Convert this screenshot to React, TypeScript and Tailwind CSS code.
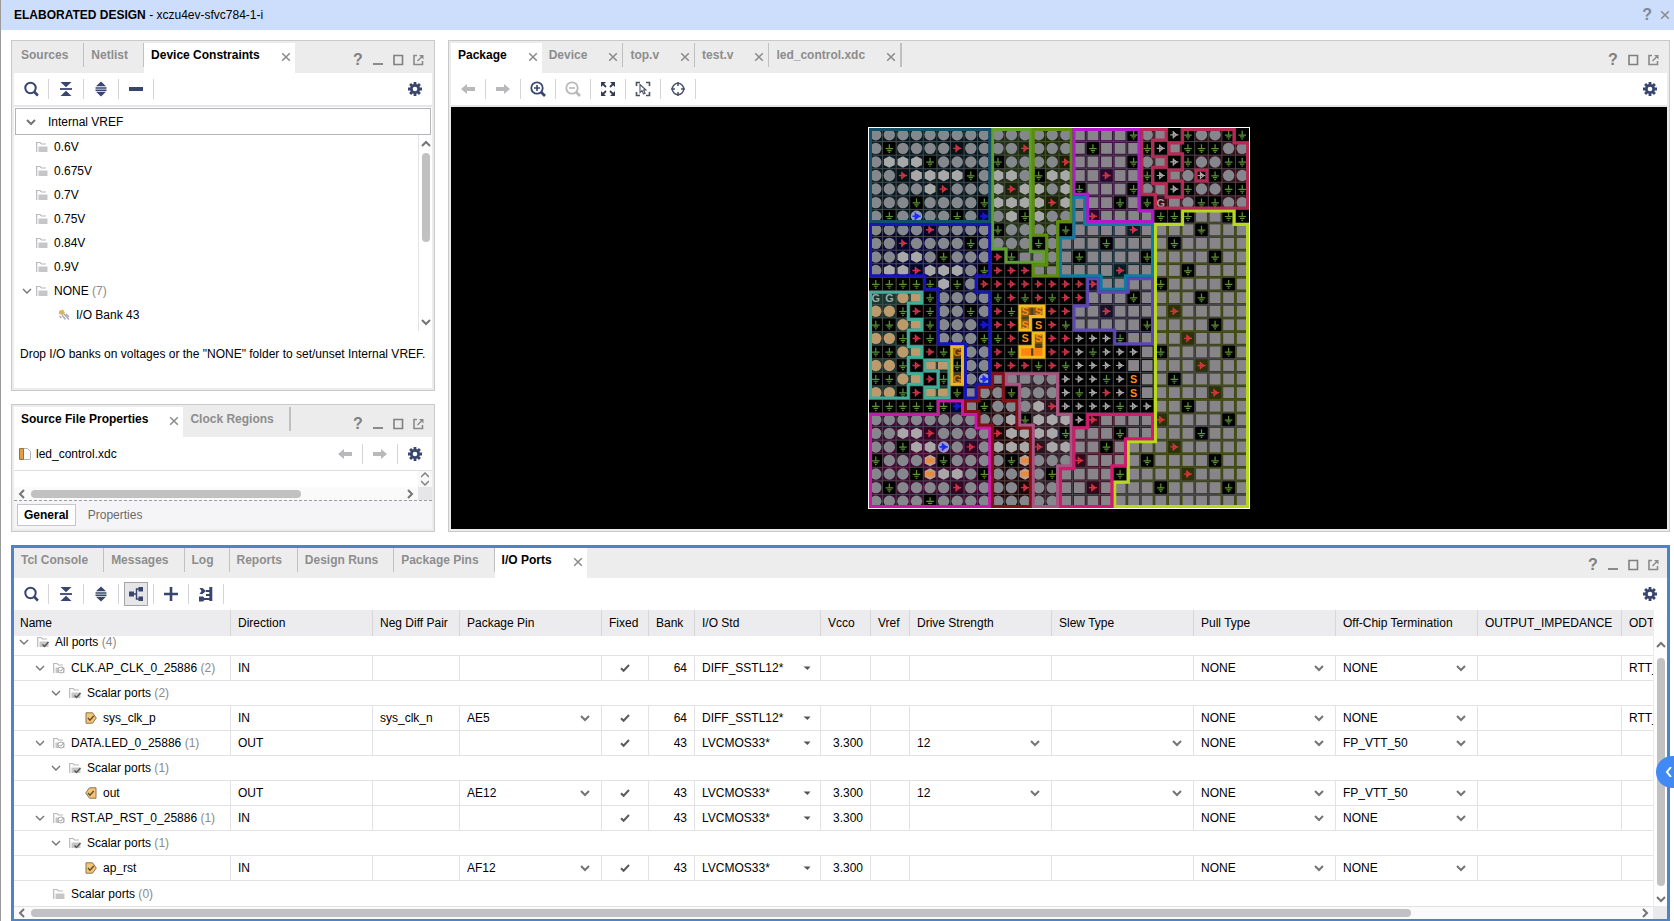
import { useState } from "react";
import type { ReactNode } from "react";
import clsx from "clsx";

const NAVY = "#38466f";

/* ---------- icons ---------- */

function Icon({ children, size = 16 }: { children: ReactNode; size?: number }) {
  return (
    <svg width={size} height={size} viewBox={`0 0 ${size} ${size}`} fill="none" className="shrink-0">
      {children}
    </svg>
  );
}

const SearchIcon = () => (
  <Icon>
    <circle cx="7.5" cy="7" r="5.2" stroke={NAVY} strokeWidth="2" />
    <path d="M11.5 11l3.4 3.6" stroke={NAVY} strokeWidth="2.6" />
  </Icon>
);

const CollapseIcon = () => (
  <Icon>
    <path d="M2.500 1h11L8 6.200zM2.500 15h11L8 9.800z" fill={NAVY} />
    <path d="M2 8h12" stroke={NAVY} strokeWidth="1.800" />
  </Icon>
);

const ExpandIcon = () => (
  <Icon>
    <path d="M3 5.300h10L8 .6zM3 10.700h10L8 15.400z" fill={NAVY} />
    <path d="M2.500 6.900h11M2.500 9.300h11" stroke={NAVY} strokeWidth="1.500" />
  </Icon>
);

const MinusIcon = () => (
  <Icon>
    <path d="M1 8h14" stroke={NAVY} strokeWidth="4" />
  </Icon>
);

const PlusIcon = () => (
  <Icon>
    <path d="M1 8h14M8 1v14" stroke={NAVY} strokeWidth="2.600" />
  </Icon>
);

const TreeIcon = () => (
  <Icon>
    <path d="M1 5.500h5v5H1zM10.500 1H15v4.500h-4.500zM10.500 10.500H15V15h-4.500z" fill={NAVY} />
    <path d="M6 8h2.500M11 3H8.500v10H11" stroke={NAVY} strokeWidth="1.400" />
  </Icon>
);

const PortIcon = () => (
  <Icon>
    <path d="M1.500 2h3l3.500 3-3.500 3h-3l2-3z" fill={NAVY} />
    <path d="M8 5h4M5 13h7M8 9h5" stroke={NAVY} strokeWidth="1.800" />
    <path d="M12.800 1v14" stroke={NAVY} strokeWidth="3" />
    <path d="M1 10.500h4l2.500 2.500L5 15.500H1z" fill={NAVY} />
  </Icon>
);

const GearIcon = () => (
  <Icon>
    <path
      d="M8 1v14M1 8h14M3.100 3.100l9.800 9.800M12.900 3.100l-9.800 9.800"
      stroke={NAVY}
      strokeWidth="2.800"
    />
    <circle cx="8" cy="8" r="5" fill={NAVY} />
    <circle cx="8" cy="8" r="2.300" fill="#fff" />
  </Icon>
);

const ArrowIcon = ({ flip }: { flip?: boolean }) => (
  <Icon>
    <path d={flip ? "M15 8L9 3v3H1v4h8v3z" : "M1 8l6-5v3h8v4H7v3z"} fill="#b9b9bb" />
  </Icon>
);

const ZoomIcon = ({ out }: { out?: boolean }) => (
  <Icon>
    <circle cx="7" cy="7" r="5.700" stroke={out ? "#b9b9bb" : NAVY} strokeWidth="1.800" />
    <path d="M11 11l4 4" stroke={out ? "#b9b9bb" : NAVY} strokeWidth="2.600" />
    <path d={out ? "M4 7h6" : "M4 7h6M7 4v6"} stroke={out ? "#b9b9bb" : NAVY} strokeWidth="1.600" />
  </Icon>
);

const FitIcon = () => (
  <Icon>
    <path d="M1 1h5L1 6zM15 1v5l-5-5zM1 15v-5l5 5zM15 15h-5l5-5z" fill="#333d52" />
    <path
      d="M2.500 2.500l3.500 3.500M13.500 2.500L10 6M2.500 13.500L6 10M13.500 13.500L10 10"
      stroke="#333d52"
      strokeWidth="1.800"
    />
  </Icon>
);

const SelectAreaIcon = () => (
  <Icon>
    <path
      d="M1.500 5V1.500H5M11 1.500h3.500V5M14.500 11v3.500H11M5 14.500H1.500V11"
      stroke="#4a5268"
      strokeWidth="1.600"
    />
    <path d="M5 3.500v8l2-1.800 1.600 3.300 1.500-.8L8.600 9H11z" stroke="#4a5268" strokeWidth="1.100" />
  </Icon>
);

const TargetIcon = () => (
  <Icon>
    <circle cx="8" cy="8" r="5.700" stroke="#4a5268" strokeWidth="1.500" />
    <path d="M8 1v4M8 11v4M1 8h4M11 8h4" stroke="#4a5268" strokeWidth="1.500" />
  </Icon>
);

const CloseIcon = () => (
  <Icon size={10}>
    <path d="M1.200 1.200l7.600 7.600M8.800 1.200L1.200 8.800" stroke="#8a8a8a" strokeWidth="1.500" />
  </Icon>
);

type Dir = "up" | "down" | "left" | "right";

const CHEVRONS: Record<Dir, string> = {
  down: "M1 3l4 4 4-4",
  up: "M1 7l4-4 4 4",
  left: "M7 1L3 5l4 4",
  right: "M3 1l4 4-4 4",
};

const Chevron = ({ dir = "down", bold }: { dir?: Dir; bold?: boolean }) => (
  <Icon size={10}>
    <path d={CHEVRONS[dir]} stroke="#747474" strokeWidth={bold ? 2 : 1.4} />
  </Icon>
);

type IconKind = "folder" | "checked" | "group" | "in" | "out" | "bank";

function NodeIcon({ kind }: { kind: IconKind }) {
  if (kind === "in" || kind === "out") {
    return (
      <Icon size={12}>
        <g transform={kind === "out" ? "translate(12 0) scale(-1 1)" : undefined}>
          <path d="M1 .8h6.500L11.300 6l-3.800 5.200H1z" fill="#f3c577" stroke="#8b7550" />
        </g>
        <path d="M3 6l2 2.200L8.700 4" stroke="#5d4d33" strokeWidth="1.400" />
      </Icon>
    );
  }
  if (kind === "bank") {
    return (
      <Icon size={12}>
        <path d="M1 2l4-1.500L7 4 4.500 6 1 5z" fill="#d9b45a" />
        <path d="M1.500 7l2 2M4 6l3.500 4.500M6 5l5 5.500M8 5l3 3" stroke="#a9a9ae" strokeWidth="1.300" />
      </Icon>
    );
  }
  return (
    <Icon size={12}>
      <path d="M.7 11V1.500H4L5.500 3H10" stroke="#b9b9bb" strokeWidth="1.200" />
      <path d="M2.500 5.500h9V11h-9z" fill="#c6c6c8" />
      {kind === "checked" && <path d="M5.500 8.500l2 2 4-4.500" stroke="#555" strokeWidth="1.500" />}
      {kind === "group" && (
        <>
          <circle cx="8" cy="8" r="3" fill="#fff" stroke="#a8a8aa" />
          <path d="M6.500 8l1.200 1.200L10.500 6" stroke="#9a9a9c" />
        </>
      )}
    </Icon>
  );
}

/* ---------- panel chrome ---------- */

function Tab({
  label,
  active,
  closable,
  last,
}: {
  label: string;
  active?: boolean;
  closable?: boolean;
  last?: boolean;
}) {
  return (
    <div className={clsx("flex h-full items-start", active && "bg-white")}>
      <div
        className={clsx(
          "flex h-6 items-center pl-[7px]",
          closable ? "pr-1" : "pr-[15px]",
          !active && "border-[#c0c0c0]",
          !active && (last ? "border-r-2" : "border-r"),
        )}
      >
        <button
          className={clsx("h-[28px] font-bold whitespace-nowrap", active ? "text-black" : "text-[#8d8d8d]")}
        >
          {label}
        </button>
        {closable && (
          <button aria-label={`Close ${label}`} className="mt-1 ml-[21px]">
            <CloseIcon />
          </button>
        )}
      </div>
    </div>
  );
}

function WindowButtons({ minimize }: { minimize?: boolean }) {
  return (
    <div className="ml-auto flex items-center gap-2 pt-1 pr-2">
      <button aria-label="Help" className="w-3 text-base leading-4 font-bold text-[#808080]">
        ?
      </button>
      {minimize && (
        <button aria-label="Minimize">
          <Icon size={12}>
            <path d="M1 10h10" stroke="#8a8a8a" strokeWidth="2" />
          </Icon>
        </button>
      )}
      <button aria-label="Maximize">
        <Icon size={12}>
          <path d="M2 1.500h8.500v9H2z" stroke="#808080" strokeWidth="1.600" />
        </Icon>
      </button>
      <button aria-label="Float">
        <Icon size={12}>
          <path d="M5 1.500H2v9h8.500V7" stroke="#8a8a8a" strokeWidth="1.600" />
          <path d="M5.500 7L10 2.500" stroke="#8a8a8a" strokeWidth="1.400" />
          <path d="M7 1h4.500v4.500z" fill="#8a8a8a" />
        </Icon>
      </button>
    </div>
  );
}

function Panel({ className, children }: { className?: string; children: ReactNode }) {
  return (
    <section className={clsx("flex flex-col border border-[#c9c9cc] bg-[#ececec] p-[2px]", className)}>
      {children}
    </section>
  );
}

function ToolButton({ label, pressed, children }: { label: string; pressed?: boolean; children: ReactNode }) {
  return (
    <div className="flex h-5 w-[35px] items-center justify-center border-r border-[#d5d5d8]">
      <button
        aria-label={label}
        className={clsx(
          "flex size-6 items-center justify-center",
          pressed && "border border-[#a5a5a8] bg-[#e6e6e9]",
        )}
      >
        {children}
      </button>
    </div>
  );
}

function Settings() {
  return (
    <button aria-label="Settings" className="mr-[9px] ml-auto">
      <GearIcon />
    </button>
  );
}

/* ---------- device constraints ---------- */

const VOLTAGES = ["0.6V", "0.675V", "0.7V", "0.75V", "0.84V", "0.9V"];

function DeviceConstraints() {
  return (
    <Panel className="flex-1">
      <div className="flex h-[30px]">
        <Tab label="Sources" />
        <Tab label="Netlist" />
        <Tab label="Device Constraints" active closable />
        <WindowButtons minimize />
      </div>
      <div className="flex h-[34px] items-center border-b-2 border-[#e6e6e8] bg-white">
        <ToolButton label="Search"><SearchIcon /></ToolButton>
        <ToolButton label="Collapse all"><CollapseIcon /></ToolButton>
        <ToolButton label="Expand all"><ExpandIcon /></ToolButton>
        <ToolButton label="Remove"><MinusIcon /></ToolButton>
        <Settings />
      </div>
      <div className="flex flex-1 flex-col bg-white">
        <button className="mx-px mt-px flex h-[27px] items-center gap-3 border border-[#b4b4b8] pl-[10px] text-left">
          <Chevron bold />
          Internal VREF
        </button>
        <div className="flex">
          <ul className="flex-1 pb-1">
            {VOLTAGES.map((v) => (
              <li key={v} className="flex h-6 items-center gap-[6px] pl-[22px]">
                <NodeIcon kind="folder" />
                {v}
              </li>
            ))}
            <li className="flex h-6 items-center gap-[6px] pl-2">
              <button aria-label="Toggle NONE" className="-mr-[2px]">
                <Chevron />
              </button>
              <NodeIcon kind="folder" />
              <span>
                NONE <span className="text-[#8a8a8a]">(7)</span>
              </span>
            </li>
            <li className="flex h-6 items-center gap-[6px] pl-[44px]">
              <NodeIcon kind="bank" />
              I/O Bank 43
            </li>
          </ul>
          <div className="flex w-[14px] flex-col items-center justify-between border-l border-[#e4e4e6] py-1">
            <Chevron dir="up" bold />
            <div className="mt-1 mb-auto h-[89px] w-2 rounded bg-[#c1c1c1]" />
            <Chevron bold />
          </div>
        </div>
        <p className="mt-[14px] px-[6px] leading-[18px]">
          Drop I/O banks on voltages or the "NONE" folder to set/unset Internal VREF.
        </p>
      </div>
    </Panel>
  );
}

/* ---------- source file properties ---------- */

function SourceFileProperties() {
  return (
    <Panel>
      <div className="flex h-[30px]">
        <Tab label="Source File Properties" active closable />
        <Tab label="Clock Regions" last />
        <WindowButtons minimize />
      </div>
      <div className="flex h-[34px] items-center border-b border-[#dedee0] bg-white pl-1">
        <Icon size={14}>
          <path d="M5.500 1.500h4l3 3v8h-7z" fill="#fff" stroke="#b5b5b8" />
          <path d="M1.500 1.500h4v11h-4z" fill="#e0a04a" stroke="#9a7238" />
        </Icon>
        <span className="ml-1">led_control.xdc</span>
        <div className="ml-auto flex">
          <ToolButton label="Back"><ArrowIcon /></ToolButton>
          <ToolButton label="Forward"><ArrowIcon flip /></ToolButton>
        </div>
        <button aria-label="Settings" className="mr-[9px] ml-[9px]">
          <GearIcon />
        </button>
      </div>
      <div className="flex h-4 justify-end bg-white">
        <div className="flex w-[14px] flex-col items-center justify-between bg-[#f7f7f7]">
          <Icon size={8}>
            <path d="M0 6l4-4 4 4" stroke="#808080" strokeWidth="1.500" />
          </Icon>
          <Icon size={8}>
            <path d="M0 2l4 4 4-4" stroke="#808080" strokeWidth="1.500" />
          </Icon>
        </div>
      </div>
      <div className="flex h-[13px] bg-[#e6e6e8]">
        <div className="flex flex-1 items-center gap-1 bg-[#fafafa] px-[3px]">
          <Chevron dir="left" bold />
          <div className="flex-1">
            <div className="h-2 w-[73%] rounded bg-[#c1c1c1]" />
          </div>
          <Chevron dir="right" bold />
        </div>
        <div className="w-[14px]" />
      </div>
      <div className="flex h-[29px] items-center border-t border-dashed border-[#9c9c9c] bg-[#f5f5f7] pl-[3px]">
        <button className="h-[22px] border border-[#c6c6c8] bg-white px-[6px] font-bold">General</button>
        <button className="px-3 text-[#6a6a6a]">Properties</button>
      </div>
    </Panel>
  );
}

/* ---------- package view ---------- */

// c ball, q square pad, h hexagon pad, m/n joined pads, t tan ball, g ground,
// r/R power on tint/black, w unassigned power, b/B blue power, o/O orange pads
const PADS = [
  "cccccccccccccccqqqqgcqwgccgg",
  "cgccccrccccrcccqgqqqgwqgggcc",
  "chhhgccccgccccrqqqqgcqwgccgg",
  "ccrhhhhgchhcghhqqrqqgwqcwgcc",
  "cccchrccchrhhchgqqqgcqwgccgg",
  "cccgccccghhhhrhqqqgqgGqcggcc",
  "cgcbccgcBchghccqrqqqqgggqqgg",
  "ccccrccccgccccgqqqqrqqqqgqqq",
  "ccrccccgccccgcqqqgqqqqgqqqqq",
  "cchhcgcccRgmmcqgqqqqgqqqqgqq",
  "chhrhhhcgRRRmmqqqqrqqqqgqqqq",
  "ggggghgcRRRRRRRRrqqqqgqqqqgq",
  "GGtngccccgRgRgRRqqqgqqqqgqqq",
  "ttgRgccgcRgKKRRqqrqqqqrqqqqq",
  "ggtngcccBRRKSRgqqqqqgqqqqgqq",
  "ttgRgcccggRSKRRwwwgqqqqrqqqq",
  "ggtnRgXccRgOORRwgwwwqgqqqqgq",
  "ttgRnngccRRRgRgwwwwqqqqqrqqq",
  "ggtnRgXcbmmmccwwwgwSqqgqqqqq",
  "ttgRnngmccgcccwgwRwSqqqqqrqq",
  "ggggggBmgccchrwwwwgwwqqgqqqq",
  "cccccccccchghhhwrqqqqrqqqqgq",
  "cchhrccccrhhhhgqqqgqqqqqgqqq",
  "ccghhbcrchhhrhhqqgqqqqrqqqqq",
  "gcccogccccgocccrqqqqgqqqqgqq",
  "cccgohhcgccocgqqqqgqqqqrqqqq",
  "cgccccrccccrccqqrqqqqgqqqqgq",
  "ccccgcccccccccqqqqqqqqqqqqqq",
];

const REGIONS: { color: string; points: string }[] = [
  { color: "#12506a", points: "0,0 9,0 9,7 0,7" },
  { color: "#5fa02c", points: "9,0 12,0 12,9 13,9 13,10 10,10 10,9 9,9" },
  { color: "#5c8c12", points: "12,0 15,0 15,7 14,7 14,11 12,11 12,10 13,10 13,8 12,8" },
  { color: "#b418cc", points: "15,0 20,0 20,6 21,6 21,7 16,7 16,5 15,5" },
  {
    color: "#b42a54",
    points:
      "20,0 22,0 22,1 21,1 21,2 22,2 22,3 21,3 21,4 22,4 22,5 23,5 23,4 22,4 22,3 23,3 23,2 22,2 22,1 23,1 23,0 27,0 27,1 28,1 28,6 21,6 21,5 20,5",
  },
  { color: "#b42a54", points: "24,3 25,3 25,4 24,4" },
  { color: "#117aa4", points: "15,5 16,5 16,7 21,7 21,11 19,11 19,12 17,12 17,11 14,11 14,8 15,8" },
  { color: "#b9da1a", points: "21,7 23,7 23,6 27,6 27,7 28,7 28,28 18,28 18,26 19,26 19,23 21,23" },
  { color: "#5c46b4", points: "16,11 17,11 17,12 19,12 19,11 21,11 21,16 18,16 18,15 15,15 15,13 16,13" },
  {
    color: "#1515b8",
    points: "0,7 9,7 9,11 8,11 8,12 9,12 9,19 8,19 8,20 7,20 7,16 5,16 5,12 4,12 4,11 0,11",
  },
  {
    color: "#3fae9b",
    points: "0,12 4,12 4,13 3,13 3,14 4,14 4,15 3,15 3,16 4,16 4,17 3,17 3,18 4,18 4,19 3,19 3,20 0,20",
  },
  { color: "#3fae9b", points: "4,17 6,17 6,20 4,20 4,19 5,19 5,18 4,18" },
  { color: "#e6bc22", points: "6,16 7,16 7,19 6,19" },
  { color: "#f2bc1c", points: "11,13 13,13 13,14 12,14 12,15 11,15" },
  { color: "#f2bc1c", points: "12,15 13,15 13,17 11,17 11,16 12,16" },
  { color: "#cc16a8", points: "0,21 5,21 5,20 7,20 7,21 8,21 8,22 9,22 9,28 0,28" },
  {
    color: "#861018",
    points: "7,20 8,20 8,19 9,19 9,18 10,18 10,20 11,20 11,22 12,22 12,28 9,28 9,22 8,22 8,21 7,21",
  },
  { color: "#a85480", points: "10,18 14,18 14,21 15,21 15,25 14,25 14,28 12,28 12,22 11,22 11,19 10,19" },
  { color: "#d4186e", points: "16,21 21,21 21,23 19,23 19,25 18,25 18,28 14,28 14,25 15,25 15,22 16,22" },
];

const POWER = "M.2 .5h.6M.42 .22v.56M.42 .3l.26 .2-.26 .2";
const GROUND = "M.5 .2v.35M.22 .52h.56M.34 .66h.32M.44 .8h.12";
const HEXAGON = "M.5 .08L.9 .28v.44L.5 .92 .1 .72V.28z";

function Letter({ char, color }: { char: string; color: string }) {
  return (
    <text x=".5" y=".79" fontSize=".8" fontWeight="700" textAnchor="middle" fill={color}>
      {char}
    </text>
  );
}

function Pad({ kind }: { kind: string }) {
  const black = <rect width="1" height="1" fill="#000" />;
  switch (kind) {
    case "c":
      return <circle cx=".5" cy=".5" r=".42" fill="#84878c" />;
    case "t":
      return <circle cx=".5" cy=".5" r=".42" fill="#bd9a6c" />;
    case "q":
      return <rect x=".1" y=".1" width=".8" height=".8" fill="#87858a" />;
    case "m":
      return <rect x=".1" y=".18" width=".8" height=".66" rx=".15" fill="#84848a" />;
    case "n":
      return <rect x=".08" y=".2" width=".84" height=".6" rx=".1" fill="#bd9a6c" />;
    case "h":
      return <path d={HEXAGON} fill="#a9a8a8" />;
    case "o":
      return (
        <>
          <path d={HEXAGON} fill="#b9a494" />
          <path d="M.2 .5h.6" stroke="#e88a3c" strokeWidth=".35" />
        </>
      );
    case "O":
      return <rect x=".1" y=".2" width=".85" height=".6" fill="#ff8410" />;
    case "g":
      return (
        <>
          {black}
          <path d={GROUND} stroke="#5c9436" strokeWidth=".09" fill="none" />
        </>
      );
    case "r":
      return (
        <>
          <rect width="1" height="1" fill="#000" fillOpacity=".25" />
          <path d={POWER} stroke="#d03440" strokeWidth=".1" fill="none" />
        </>
      );
    case "R":
      return (
        <>
          {black}
          <path d={POWER} stroke="#c83246" strokeWidth=".1" fill="none" />
        </>
      );
    case "w":
      return (
        <>
          {black}
          <path d={POWER} stroke="#a8a8a8" strokeWidth=".09" fill="none" />
        </>
      );
    case "b":
      return (
        <>
          <circle cx=".5" cy=".5" r=".42" fill="#9a9cc8" />
          <path d={POWER} stroke="#1c2cf0" strokeWidth=".12" fill="none" />
        </>
      );
    case "B":
      return (
        <>
          <rect width="1" height="1" fill="#04043c" />
          <path d={POWER} stroke="#1616d0" strokeWidth=".14" fill="none" />
        </>
      );
    case "G":
      return <Letter char="G" color="#a4a4a4" />;
    case "X":
      return <Letter char="G" color="#d27812" />;
    case "K":
      return (
        <>
          <rect x=".1" y=".1" width=".8" height=".8" fill="#8a5a10" />
          <Letter char="S" color="#ff8c18" />
        </>
      );
    default:
      return (
        <>
          {black}
          <Letter char="S" color="#ff8c18" />
        </>
      );
  }
}

function PackageMap() {
  const lines = Array.from({ length: 27 }, (_, i) => `M${i + 1} 0v28M0 ${i + 1}h28`).join("");
  return (
    <svg
      viewBox="0 0 28 28"
      role="img"
      aria-label="Package pin map"
      className="size-[382px] border border-white bg-black"
    >
      <defs>
        {REGIONS.map((r, i) => (
          <clipPath key={i} id={`region-${i}`}>
            <polygon points={r.points} />
          </clipPath>
        ))}
      </defs>
      {REGIONS.map((r, i) => (
        <polygon key={i} points={r.points} fill={r.color} fillOpacity=".32" />
      ))}
      {PADS.map((row, y) =>
        row.split("").map((kind, x) => (
          <g key={`${x}-${y}`} transform={`translate(${x} ${y})`}>
            <Pad kind={kind} />
          </g>
        )),
      )}
      <path d={lines} stroke="#4a4a4a" strokeWidth=".07" />
      {REGIONS.map((r, i) => (
        <polygon key={i} points={r.points} fill="none" stroke={r.color} strokeOpacity=".35" strokeWidth=".07" />
      ))}
      {REGIONS.map((r, i) => (
        <polygon
          key={i}
          points={r.points}
          fill="none"
          stroke={r.color}
          strokeWidth=".44"
          clipPath={`url(#region-${i})`}
        />
      ))}
    </svg>
  );
}

function PackagePanel() {
  return (
    <Panel className="min-w-0 flex-1">
      <div className="flex h-[30px]">
        <Tab label="Package" active closable />
        <Tab label="Device" closable />
        <Tab label="top.v" closable />
        <Tab label="test.v" closable />
        <Tab label="led_control.xdc" closable last />
        <WindowButtons />
      </div>
      <div className="flex h-[34px] items-center border-b-2 border-[#e6e6e8] bg-white">
        <ToolButton label="Back"><ArrowIcon /></ToolButton>
        <ToolButton label="Forward"><ArrowIcon flip /></ToolButton>
        <ToolButton label="Zoom in"><ZoomIcon /></ToolButton>
        <ToolButton label="Zoom out"><ZoomIcon out /></ToolButton>
        <ToolButton label="Zoom fit"><FitIcon /></ToolButton>
        <ToolButton label="Select area"><SelectAreaIcon /></ToolButton>
        <ToolButton label="Center"><TargetIcon /></ToolButton>
        <Settings />
      </div>
      <div className="flex flex-1 items-center justify-center bg-black py-5">
        <PackageMap />
      </div>
    </Panel>
  );
}

/* ---------- i/o ports ---------- */

const COLUMNS: { title: string; width: string }[] = [
  { title: "Name", width: "w-[217px]" },
  { title: "Direction", width: "w-[142px]" },
  { title: "Neg Diff Pair", width: "w-[87px]" },
  { title: "Package Pin", width: "w-[142px]" },
  { title: "Fixed", width: "w-[47px]" },
  { title: "Bank", width: "w-[46px]" },
  { title: "I/O Std", width: "w-[126px]" },
  { title: "Vcco", width: "w-[50px]" },
  { title: "Vref", width: "w-[39px]" },
  { title: "Drive Strength", width: "w-[142px]" },
  { title: "Slew Type", width: "w-[142px]" },
  { title: "Pull Type", width: "w-[142px]" },
  { title: "Off-Chip Termination", width: "w-[142px]" },
  { title: "OUTPUT_IMPEDANCE", width: "w-[144px]" },
  { title: "ODT", width: "" },
];

interface Port {
  name: string;
  count?: number;
  depth: number;
  icon: IconKind;
  direction?: string;
  negPair?: string;
  pin?: string;
  bank?: number;
  std?: string;
  vcco?: string;
  drive?: string;
  slew?: boolean;
  pull?: string;
  termination?: string;
  odt?: string;
}

const clk = { direction: "IN", bank: 64, std: "DIFF_SSTL12*", pull: "NONE", termination: "NONE", odt: "RTT_40" };
const led = {
  direction: "OUT",
  bank: 43,
  std: "LVCMOS33*",
  vcco: "3.300",
  drive: "12",
  slew: true,
  pull: "NONE",
  termination: "FP_VTT_50",
};
const rst = { direction: "IN", bank: 43, std: "LVCMOS33*", vcco: "3.300", pull: "NONE", termination: "NONE" };

const PORTS: Port[] = [
  { name: "All ports", count: 4, depth: 0, icon: "checked" },
  { name: "CLK.AP_CLK_0_25886", count: 2, depth: 1, icon: "group", ...clk },
  { name: "Scalar ports", count: 2, depth: 2, icon: "checked" },
  { name: "sys_clk_p", depth: 3, icon: "in", negPair: "sys_clk_n", pin: "AE5", ...clk },
  { name: "DATA.LED_0_25886", count: 1, depth: 1, icon: "group", ...led },
  { name: "Scalar ports", count: 1, depth: 2, icon: "checked" },
  { name: "out", depth: 3, icon: "out", pin: "AE12", ...led },
  { name: "RST.AP_RST_0_25886", count: 1, depth: 1, icon: "group", ...rst },
  { name: "Scalar ports", count: 1, depth: 2, icon: "checked" },
  { name: "ap_rst", depth: 3, icon: "in", pin: "AF12", ...rst },
  { name: "Scalar ports", count: 0, depth: 1, icon: "folder" },
];

const INDENT = ["pl-[5px]", "pl-[21px]", "pl-[37px]", "pl-[53px]"];

function NameCell({ port }: { port: Port }) {
  const branch = !!port.count;
  return (
    <div className={clsx("flex items-center gap-[6px] whitespace-nowrap", INDENT[port.depth])}>
      <span className="mr-[2px] flex w-[10px]">
        {branch && (
          <button aria-label={`Toggle ${port.name}`}>
            <Chevron />
          </button>
        )}
      </span>
      <NodeIcon kind={port.icon} />
      <span>
        {port.name}
        {port.count !== undefined && <span className="text-[#8a8a8a]"> ({port.count})</span>}
      </span>
    </div>
  );
}

function SelectCell({ value, label, small }: { value?: string; label: string; small?: boolean }) {
  if (value === undefined) return null;
  return (
    <div className={clsx("flex items-center", small ? "pr-[9px]" : "pr-[11px]")}>
      <select
        aria-label={label}
        defaultValue={value}
        className="min-w-0 flex-1 appearance-none bg-transparent outline-none"
      >
        <option>{value}</option>
      </select>
      {small ? (
        <Icon size={8}>
          <path d="M.5 2.500h7L4.500 6z" fill="#555" />
        </Icon>
      ) : (
        <Chevron bold />
      )}
    </div>
  );
}

function FixedCell({ name }: { name: string }) {
  const [checked, setChecked] = useState(true);
  return (
    <label className="flex cursor-pointer justify-center">
      <input
        type="checkbox"
        aria-label={`${name} fixed`}
        checked={checked}
        onChange={() => setChecked(!checked)}
        className="sr-only"
      />
      <Icon size={10}>
        {checked && <path d="M1 5.200l2.600 2.600L9 2" stroke="#5c5c5c" strokeWidth="2" />}
      </Icon>
    </label>
  );
}

const CELL = "border-r border-b border-[#e2e2e4] pl-[7px]";

function PortRow({ port, first, last }: { port: Port; first?: boolean; last?: boolean }) {
  const height = first ? "h-[19px]" : "h-[25px]";
  if (!port.std) {
    return (
      <tr className={height}>
        <td
          colSpan={COLUMNS.length}
          className={clsx("border-[#e2e2e4]", !last && "border-b", first && "pb-[7px] leading-3")}
        >
          <NameCell port={port} />
        </td>
      </tr>
    );
  }
  return (
    <tr className={height}>
      <td className="border-r border-b border-[#e2e2e4]">
        <NameCell port={port} />
      </td>
      <td className={CELL}>{port.direction}</td>
      <td className={CELL}>{port.negPair}</td>
      <td className={CELL}>
        <SelectCell value={port.pin} label={`${port.name} package pin`} />
      </td>
      <td className="border-r border-b border-[#e2e2e4]">
        <FixedCell name={port.name} />
      </td>
      <td className={clsx(CELL, "pr-[7px] text-right")}>{port.bank}</td>
      <td className={CELL}>
        <SelectCell value={port.std} label={`${port.name} I/O standard`} small />
      </td>
      <td className={clsx(CELL, "pr-[7px] text-right")}>{port.vcco}</td>
      <td className={CELL} />
      <td className={CELL}>
        <SelectCell value={port.drive} label={`${port.name} drive strength`} />
      </td>
      <td className={CELL}>
        <SelectCell value={port.slew ? "" : undefined} label={`${port.name} slew type`} />
      </td>
      <td className={CELL}>
        <SelectCell value={port.pull} label={`${port.name} pull type`} />
      </td>
      <td className={CELL}>
        <SelectCell value={port.termination} label={`${port.name} off-chip termination`} />
      </td>
      <td className={CELL} />
      <td className="overflow-hidden border-b border-[#e2e2e4] pl-[7px]">{port.odt}</td>
    </tr>
  );
}

function IoPorts() {
  return (
    <section className="flex flex-col border-3 border-[#5082c8] bg-white">
      <div className="flex h-[30px] bg-[#ededed]">
        <Tab label="Tcl Console" />
        <Tab label="Messages" />
        <Tab label="Log" />
        <Tab label="Reports" />
        <Tab label="Design Runs" />
        <Tab label="Package Pins" />
        <Tab label="I/O Ports" active closable />
        <WindowButtons minimize />
      </div>
      <div className="flex h-8 items-center">
        <ToolButton label="Search"><SearchIcon /></ToolButton>
        <ToolButton label="Collapse all"><CollapseIcon /></ToolButton>
        <ToolButton label="Expand all"><ExpandIcon /></ToolButton>
        <ToolButton label="Group by interface" pressed><TreeIcon /></ToolButton>
        <ToolButton label="Add port"><PlusIcon /></ToolButton>
        <ToolButton label="Create interface"><PortIcon /></ToolButton>
        <Settings />
      </div>
      <div className="flex">
        <div className="min-w-0 flex-1 overflow-hidden">
          <table className="w-full table-fixed border-separate border-spacing-0">
            <thead>
              <tr className="h-[26px] bg-[#ececee]">
                {COLUMNS.map((c, i) => (
                  <th
                    key={c.title}
                    className={clsx(
                      "text-left font-normal whitespace-nowrap",
                      i === 0 ? "pl-[6px]" : "pl-[7px]",
                      i < COLUMNS.length - 1 ? "border-r border-[#d6d6d8]" : "overflow-hidden",
                      c.width,
                    )}
                  >
                    {c.title}
                  </th>
                ))}
              </tr>
            </thead>
            <tbody>
              {PORTS.map((port, i) => (
                <PortRow key={i} port={port} first={i === 0} last={i === PORTS.length - 1} />
              ))}
            </tbody>
          </table>
        </div>
        <div className="flex w-[14px] flex-col items-center border-l border-[#ececee] bg-[#fdfdfd] pt-[30px] pb-[2px]">
          <Chevron dir="up" bold />
          <div className="my-2 w-2 flex-1 rounded bg-[#c1c1c1]" />
          <Chevron bold />
        </div>
      </div>
      <div className="flex h-[13px]">
        <div className="flex flex-1 items-center gap-1 border-t border-[#e2e2e4] bg-[#fafafa] px-[3px]">
          <Chevron dir="left" bold />
          <div className="flex-1">
            <div className="h-2 w-[86%] rounded bg-[#c1c1c1]" />
          </div>
          <Chevron dir="right" bold />
        </div>
        <div className="w-[14px] bg-[#e9e9eb]" />
      </div>
    </section>
  );
}

export default function App() {
  return (
    <div className="relative flex min-h-screen flex-col overflow-hidden border-l border-[#9a9a9a] bg-white font-['Liberation_Sans',Arial,sans-serif] text-xs text-black">
      <header className="flex h-[30px] items-center bg-[#cddefc] pr-1 pl-[13px]">
        <h1>
          <b>ELABORATED DESIGN</b> - xczu4ev-sfvc784-1-i
        </h1>
        <button aria-label="Help" className="mr-2 ml-auto text-base leading-4 font-bold text-[#7d8794]">
          ?
        </button>
        <button aria-label="Close">
          <CloseIcon />
        </button>
      </header>
      <main className="flex flex-1 flex-col gap-[13px] pt-[10px] pr-1 pl-[10px]">
        <div className="flex flex-1 gap-[13px]">
          <div className="flex w-[424px] shrink-0 flex-col gap-[13px]">
            <DeviceConstraints />
            <SourceFileProperties />
          </div>
          <PackagePanel />
        </div>
        <IoPorts />
      </main>
      <button
        aria-label="Open side panel"
        className="absolute -right-[14px] bottom-[134px] flex size-8 items-center rounded-full bg-[#4189f5] pl-2"
      >
        <Icon size={10}>
          <path d="M7 0L3 5l4 5" stroke="#fff" strokeWidth="2" />
        </Icon>
      </button>
    </div>
  );
}
